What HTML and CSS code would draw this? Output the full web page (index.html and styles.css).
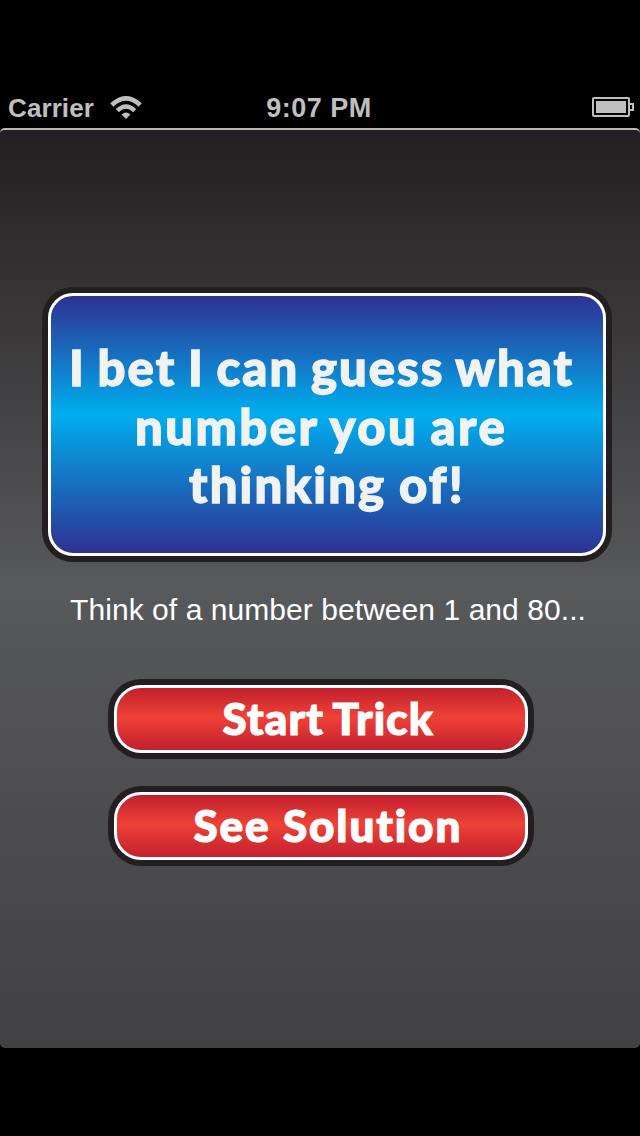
FILE: index.html
```html
<!DOCTYPE html>
<html lang="en">
<head>
<meta charset="utf-8">
<title>Number Trick</title>
<link rel="stylesheet" href="styles.css">
</head>
<body>
<header class="status">
  <div class="status-left">
    <span class="carrier">Carrier</span>
    <svg class="wifi" width="32" height="24" viewBox="0 0 32 24" fill="none" stroke="#bfbfbf">
      <path d="M1.8 9 Q16 -4.2 30.2 9" stroke-width="4.6"/>
      <path d="M7.3 14.6 Q16 6.4 24.7 14.6" stroke-width="4.4"/>
      <path d="M11.6 18.6 Q16 14.6 20.4 18.6 L16 23Z" fill="#bfbfbf" stroke="none"/>
    </svg>
  </div>
  <span class="clock">9:07 PM</span>
  <svg class="battery" width="42" height="20" viewBox="0 0 42 20">
    <rect x="1" y="1" width="36" height="18" rx="1" fill="none" stroke="#bfbfbf" stroke-width="2"/>
    <rect x="4" y="4" width="30" height="12" fill="#bfbfbf"/>
    <path d="M38 7h3v6h-3" fill="none" stroke="#bfbfbf" stroke-width="2"/>
  </svg>
</header>
<main class="screen">
  <h1 class="banner">
    <span class="line line-one">I bet I can guess what</span>
    <span class="line line-two">number you are</span>
    <span class="line line-three">thinking of!</span>
  </h1>
  <p class="hint">Think of a number between 1 and 80...</p>
  <button class="action start"><span class="label">Start Trick</span></button>
  <button class="action solution"><span class="label">See Solution</span></button>
</main>
</body>
</html>
```
FILE: styles.css
```css
* { box-sizing: border-box; }
body {
  margin: 0;
  height: 1136px;
  padding-top: 88px;
  background: #000;
  font-family: "Liberation Sans", Arial, sans-serif;
  overflow: hidden;
}
.status {
  height: 40px;
  display: grid;
  grid-template-columns: 1fr auto 1fr;
  padding: 0 6px 0 8px;
  color: #bfbfbf;
  font-size: 26px;
  font-weight: bold;
  line-height: 40px;
}
.status-left { display: flex; }
.carrier { width: 102px; letter-spacing: 0.1px; }
.wifi { margin-top: 8px; }
.clock { margin: 0 4px 0 0; letter-spacing: 0.5px; font-size: 27px; line-height: 40px; }
.battery { justify-self: end; margin-top: 9px; }
.screen {
  height: 920px;
  display: flex;
  flex-direction: column;
  align-items: center;
  border-top: 2px solid #bcbaaf;
  border-radius: 5px;
  background: linear-gradient(#231f20 0, #58595b 49.6%, #414042 100%);
}
.banner, .action {
  border: 3px solid #fff;
  box-shadow: 0 0 0 6px #231f20;
  font-family: Lato, sans-serif;
  font-weight: 900;
  font-variant-ligatures: none;
}
.banner {
  width: 558px;
  height: 263px;
  margin: 163px 0 0 14px;
  padding-top: 42px;
  border-radius: 25px;
  color: #f1f2f2;
  background: linear-gradient(#2e3192 0, #00aeef 46%, #2e3192 100%) padding-box;
  font-size: 49px;
  line-height: 58.7px;
  -webkit-text-stroke: 1.3px #f1f2f2;
}
.line { display: block; white-space: nowrap; }
.line-one { padding-left: 18px; letter-spacing: 2.05px; word-spacing: -2px; }
.line-two { padding-left: 84px; letter-spacing: 2.5px; word-spacing: -2px; }
.line-three { padding-left: 138px; letter-spacing: 2.15px; word-spacing: -1px; }
.hint {
  margin: 34px 0 0 16px;
  color: #fff;
  font-size: 30px;
  letter-spacing: 0.06px;
  line-height: 40px;
  white-space: nowrap;
}
.action {
  width: 414px;
  height: 68px;
  padding: 0;
  border-radius: 27px;
  color: #fff;
  background: linear-gradient(#c1202e 0, #ef4136 47%, #c1202e 100%) padding-box;
  font-size: 44px;
  line-height: 61px;
  text-align: left;
  -webkit-text-stroke: 1.2px #fff;
}
.label { display: block; height: 62px; white-space: nowrap; }
.start { margin: 55px 0 0 1px; }
.start .label { padding-left: 106px; letter-spacing: 1.2px; word-spacing: -2px; }
.solution { margin: 39px 0 0 1px; }
.solution .label { padding-left: 77px; letter-spacing: 1.9px; }
```
